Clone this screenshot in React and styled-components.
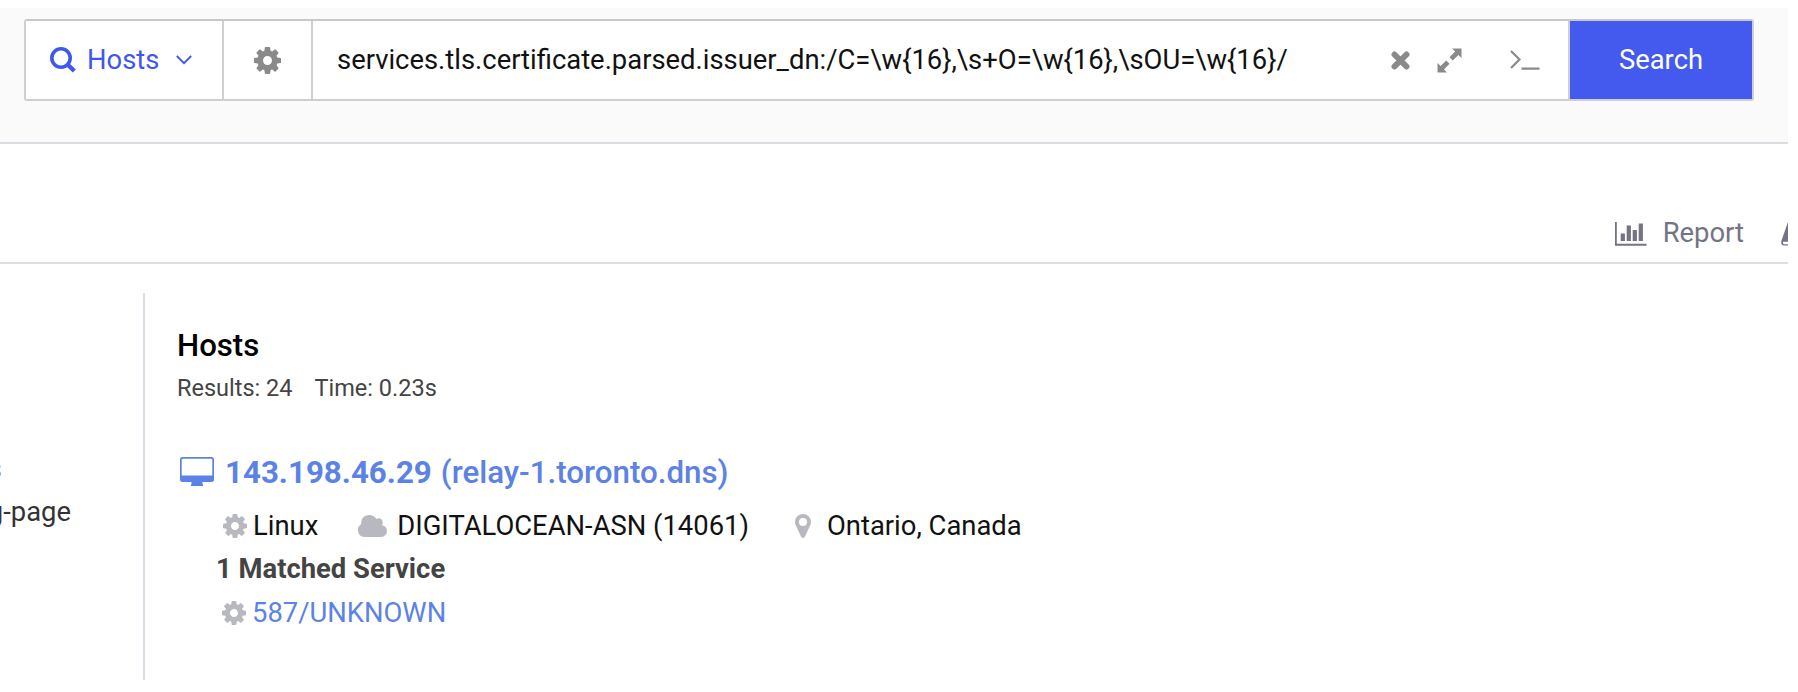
import React, { useState } from "react";
import styled, { createGlobalStyle } from "styled-components";

const COG = "M1152 896q0-106-75-181t-181-75-181 75-75 181 75 181 181 75 181-75 75-181zm512-109v222q0 12-8 23t-20 13l-185 28q-19 54-39 91 35 50 107 138 10 12 10 25t-9 23q-27 37-99 108t-94 71q-12 0-26-9l-138-108q-44 23-91 38-16 136-29 186-7 28-36 28h-222q-14 0-24.500-8.500t-11.500-21.500l-28-184q-49-16-90-37l-141 107q-10 9-25 9-14 0-25-11-126-114-165-168-7-10-7-23 0-12 8-23 15-21 51-66.500t54-70.500q-27-50-41-99l-183-27q-13-2-21-12.500t-8-23.500v-222q0-12 8-23t19-13l186-28q14-46 39-92-40-57-107-138-10-12-10-24 0-10 9-23 26-36 98.500-107.500t94.500-71.500q13 0 26 10l138 107q44-23 91-38 16-136 29-186 7-28 36-28h222q14 0 24.500 8.500t11.500 21.500l28 184q49 16 90 37l142-107q9-9 24-9 13 0 25 10 129 119 165 170 7 8 7 22 0 12-8 23-15 21-51 66.500t-54 70.500q26 50 41 98l183 28q13 2 21 12.500t8 23.500z"

const CogIcon = ({ size }) => (
    <svg width={size} height={size} viewBox="128 128 1536 1536" fill="currentColor"><path d={COG} /></svg>
)

const SearchIcon = () => (
    <svg width="26" height="26" viewBox="0 0 26 26" fill="none" stroke="currentColor">
        <circle cx="11" cy="11" r="9.2" strokeWidth="3.6" />
        <path d="M17.500 17.500L24.300 24" strokeWidth="4.400" />
    </svg>
)

const ChevronIcon = () => (
    <svg width="16" height="10" viewBox="0 0 16 10" fill="none" stroke="currentColor" strokeWidth="1.800">
        <path d="M0.800 1L8 8.200L15.200 1" />
    </svg>
)

const CloseIcon = () => (
    <svg width="19" height="19" viewBox="0 0 19 19" fill="none" stroke="currentColor" strokeWidth="6" strokeLinecap="round">
        <path d="M3.500 3.500L15.500 15.500M15.500 3.500L3.500 15.500" />
    </svg>
)

const ExpandIcon = () => (
    <svg width="25" height="25" viewBox="0 0 25 25" fill="currentColor">
        <path d="M15 0.500h9.500v9.500l-3.100-3.100-5.600 5.600-3.300-3.300 5.600-5.600zM0.500 15l3.100 3.100 5.600-5.600 3.300 3.300-5.600 5.600 3.100 3.100H0.500z" />
    </svg>
)

const PromptIcon = () => (
    <svg width="30" height="20" viewBox="0 0 30 20" fill="none" stroke="currentColor" strokeWidth="2.200">
        <path d="M1 1L9.500 9.500L1 18M11.500 18.700H29.500" />
    </svg>
)

const ChartIcon = () => (
    <svg width="32" height="24" viewBox="0 0 32 24" fill="currentColor">
        <path d="M0 0h1.800v21.800H31.500v1.900H0zM5.700 11.500h4.200V19H5.700zM11.700 3.500h4.200V19h-4.200zM17.700 8h4.200v11h-4.200zM23.700 1.500h4.200V19h-4.200z" />
    </svg>
)

const FlaskIcon = () => (
    <svg width="7" height="24" viewBox="0 0 7 24" fill="currentColor">
        <path d="M7 0L0.500 18.500Q-0.500 23.500 3 23.500H7V22.300H3.200Q1.800 22.300 2 19.800H7z" />
    </svg>
)

const MonitorIcon = () => (
    <svg width="34" height="29" viewBox="0 0 34 29" fill="currentColor">
        <path fillRule="evenodd" d="M2.500 0h29a2.500 2.500 0 0 1 2.500 2.500v20a2.500 2.500 0 0 1-2.500 2.500h-9v2q0.700 0.500 0.700 2h-12.400q0-1.500 0.700-2V25h-9A2.500 2.500 0 0 1 0 22.500v-20A2.500 2.500 0 0 1 2.500 0zM2.700 1.700q-1 0-1 1v15.800h30.600v-15.800q0-1-1-1z" />
    </svg>
)

const CloudIcon = () => (
    <svg width="30" height="22" viewBox="0 0 30 22" fill="currentColor">
        <path d="M7 22A7 7 0 0 1 4 9.300Q3.800 0.400 12 0q5 0 7.300 4Q24.500 1.800 25.700 7q0.200 1.700-0.700 3.300Q30 11.500 30 16.200 29.500 21.500 24 22z" />
    </svg>
)

const PinIcon = () => (
    <svg width="16" height="24" viewBox="0 0 16 24" fill="currentColor">
        <path fillRule="evenodd" d="M8 0a8 8 0 0 1 8 8q0 2-0.700 3.300L9.700 22.900Q8 25 6.300 22.900L0.700 11.300Q0 10 0 8a8 8 0 0 1 8-8zm0 4a4 4 0 1 0 0 8 4 4 0 0 0 0-8z" />
    </svg>
)

const App = () => {
    const [query, setQuery] = useState("services.tls.certificate.parsed.issuer_dn:/C=\\w{16},\\s+O=\\w{16},\\sOU=\\w{16}/")

    const onChangeHandler = (e) => {
        setQuery(e.target.value)
    }
    const onSubmitHandler = (e) => {
        e.preventDefault();
    }

    return (
        <StPage>
            <GlobalStyle />
            <StHeader>
                <StSearchBar onSubmit={onSubmitHandler}>
                    <StIndexButton type="button">
                        <SearchIcon />
                        <StIndexName>Hosts</StIndexName>
                        <ChevronIcon />
                    </StIndexButton>
                    <StSettingsButton type="button"><CogIcon size={27} /></StSettingsButton>
                    <StQuery>
                        <StQueryInput type="text" spellCheck="false" value={query} onChange={onChangeHandler} />
                        <StTools>
                            <CloseIcon />
                            <ExpandIcon />
                            <StPrompt><PromptIcon /></StPrompt>
                        </StTools>
                    </StQuery>
                    <StSearchButton>Search</StSearchButton>
                </StSearchBar>
            </StHeader>
            <StActions>
                <StActionIcon><ChartIcon /></StActionIcon>
                <StReport>Report</StReport>
                <StActionIcon><FlaskIcon /></StActionIcon>
            </StActions>
            <StMain>
                <StSidebar>
                    <StFilterLink>s</StFilterLink>
                    <StFilterText>g-page</StFilterText>
                </StSidebar>
                <StResults>
                    <StHeading>Hosts</StHeading>
                    <StSummary>
                        <span>Results: 24</span>
                        <span>Time: 0.23s</span>
                    </StSummary>
                    <StHost>
                        <StHostIcon><MonitorIcon /></StHostIcon>
                        <StIp>143.198.46.29</StIp>
                        <StDns>(relay-1.toronto.dns)</StDns>
                    </StHost>
                    <StMeta>
                        <StTag $gap="6px"><CogIcon size={24} /><StText>Linux</StText></StTag>
                        <StTag $gap="10px" $before="39px"><CloudIcon /><StText>DIGITALOCEAN-ASN (14061)</StText></StTag>
                        <StTag $gap="16px" $before="46px"><PinIcon /><StText>Ontario, Canada</StText></StTag>
                    </StMeta>
                    <StMatched>1 Matched Service</StMatched>
                    <StService>
                        <CogIcon size={24} />
                        <StServiceLink>587/UNKNOWN</StServiceLink>
                    </StService>
                </StResults>
            </StMain>
        </StPage>
    )
}

export default App;

const GlobalStyle = createGlobalStyle`
    * {
        box-sizing: border-box;
    }
    body {
        margin: 0;
        background: #fff;
        overflow: hidden;
    }
    svg {
        display: block;
        flex: none;
    }
    button, input {
        font: inherit;
        border: 0;
        padding: 0;
        background: none;
    }
`
const StPage = styled.div`
    width: 1788px;
    height: 692px;
    padding-top: 8px;
    overflow: hidden;
    font-family: Roboto, sans-serif;
    font-size: 27.4px;
    line-height: 32px;
    white-space: nowrap;
    color: #111;
`
const StHeader = styled.header`
    height: 136px;
    padding: 11px 34px 0 24px;
    background: #fafafa;
    border-bottom: 2px solid #dcdce3;
`
const StSearchBar = styled.form`
    display: flex;
    height: 82px;
    border: 2px solid #cfcfcf;
    border-top-color: #c8c8c8;
    border-radius: 3px;
    background: #fff;
`
const StIndexButton = styled.button`
    display: flex;
    align-items: center;
    width: 198px;
    padding-left: 24px;
    border-right: 2px solid #cfcfcf;
    color: #3f57ee;
`
const StIndexName = styled.span`
    margin: 0 17px 0 11px;
`
const StSettingsButton = styled.button`
    display: flex;
    align-items: center;
    justify-content: center;
    width: 89px;
    border-right: 2px solid #cfcfcf;
    color: #8a8a8a;
`
const StQuery = styled.div`
    display: flex;
    align-items: center;
    flex: 1;
    padding: 0 28px 0 24px;
    border-right: 2px solid #cfcfcf;
`
const StQueryInput = styled.input`
    flex: 1;
    min-width: 0;
    height: 60px;
    color: #111;
    outline: none;
`
const StTools = styled.div`
    display: flex;
    align-items: center;
    gap: 27px;
    color: #8a8a8a;
`
const StPrompt = styled.span`
    margin-left: 21px;
`
const StSearchButton = styled.button`
    width: 182px;
    background: #4459ee;
    color: #fff;
`
const StActions = styled.div`
    display: flex;
    align-items: flex-end;
    justify-content: flex-end;
    height: 120px;
    padding-bottom: 13px;
    border-bottom: 2px solid #dedede;
    color: #747384;
`
const StActionIcon = styled.span`
    margin-bottom: 3px;
`
const StReport = styled.span`
    margin: 0 37px 0 16px;
`
const StMain = styled.main`
    display: flex;
    height: 416px;
    padding-top: 29px;
`
const StSidebar = styled.aside`
    width: 145px;
    height: 387px;
    padding-top: 160px;
    border-right: 2px solid #dcdce6;
`
const StFilterLink = styled.div`
    display: flex;
    justify-content: flex-end;
    width: 2px;
    overflow: hidden;
    color: #5c82e6;
`
const StFilterText = styled.div`
    display: flex;
    justify-content: flex-end;
    width: 71px;
    margin-top: 11px;
    overflow: hidden;
    color: #333;
`
const StResults = styled.section`
    padding: 37px 0 0 32px;
`
const StHeading = styled.h1`
    margin: 0;
    font-size: 31.2px;
    font-weight: 500;
    color: #000;
`
const StSummary = styled.div`
    display: flex;
    gap: 22px;
    margin-top: 12px;
    font-size: 23.5px;
    line-height: 28px;
    color: #444;
`
const StHost = styled.div`
    display: flex;
    align-items: center;
    margin-top: 55px;
    padding-left: 3px;
    font-size: 31.3px;
    color: #5c82e6;
`
const StHostIcon = styled.span`
    margin-bottom: 3px;
`
const StIp = styled.span`
    margin: 0 9px 0 11px;
    font-weight: 700;
`
const StDns = styled.span`
    font-weight: 500;
`
const StMeta = styled.div`
    display: flex;
    margin-top: 21px;
    padding-left: 46px;
`
const StTag = styled.div`
    display: flex;
    align-items: center;
    gap: ${(props) => props.$gap};
    margin-left: ${(props) => props.$before || "0"};
    color: #b8b8c0;
`
const StText = styled.span`
    color: #111;
`
const StMatched = styled.div`
    margin-top: 11px;
    padding-left: 39px;
    font-weight: 700;
    color: #444;
`
const StService = styled.div`
    display: flex;
    align-items: center;
    gap: 6px;
    margin-top: 12px;
    padding-left: 45px;
    color: #b8b8c0;
`
const StServiceLink = styled.a`
    color: #5c82e6;
`
